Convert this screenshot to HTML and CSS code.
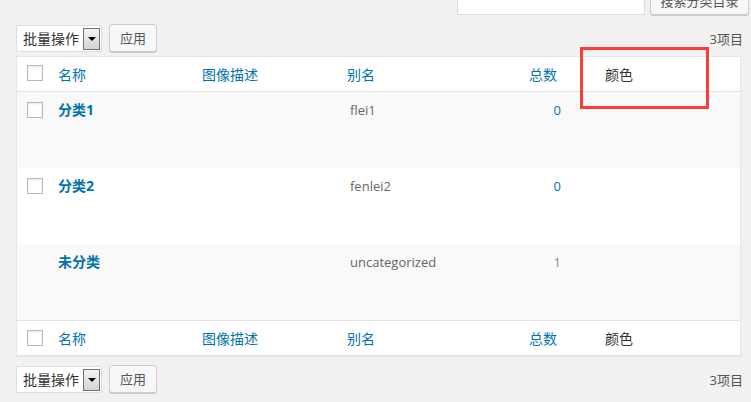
FILE: index.html
```html
<!DOCTYPE html>
<html lang="zh-CN">
<head>
<meta charset="utf-8">
<title>分类目录</title>
<link rel="stylesheet" href="styles.css">
</head>
<body>
<div class="wrap">
  <div class="search-box">
    <div class="search-input"></div>
    <div class="btn search-btn">搜索分类目录</div>
  </div>

  <div class="tablenav tablenav-top">
    <div class="bulk">
      <span class="bulk-label">批量操作</span>
      <span class="bulk-arrow"><span class="tri"></span></span>
    </div>
    <div class="btn apply">应用</div>
    <div class="count">3项目</div>
  </div>

  <div class="list">
    <div class="row head">
      <div class="cell cb"><span class="check"></span></div>
      <div class="cell link">名称</div>
      <div class="cell link">图像描述</div>
      <div class="cell link">别名</div>
      <div class="cell link posts-h">总数</div>
      <div class="cell plain">颜色</div>
    </div>
    <div class="row item alt">
      <div class="cell cb"><span class="check"></span></div>
      <div class="cell title">分类1</div>
      <div class="cell"></div>
      <div class="cell slug">flei1</div>
      <div class="cell num">0</div>
      <div class="cell"></div>
    </div>
    <div class="row item">
      <div class="cell cb"><span class="check"></span></div>
      <div class="cell title">分类2</div>
      <div class="cell"></div>
      <div class="cell slug">fenlei2</div>
      <div class="cell num">0</div>
      <div class="cell"></div>
    </div>
    <div class="row item alt">
      <div class="cell cb"></div>
      <div class="cell title">未分类</div>
      <div class="cell"></div>
      <div class="cell slug">uncategorized</div>
      <div class="cell num num-muted">1</div>
      <div class="cell"></div>
    </div>
    <div class="row head foot">
      <div class="cell cb"><span class="check"></span></div>
      <div class="cell link">名称</div>
      <div class="cell link">图像描述</div>
      <div class="cell link">别名</div>
      <div class="cell link posts-h">总数</div>
      <div class="cell plain">颜色</div>
    </div>
  </div>

  <div class="tablenav tablenav-bottom">
    <div class="bulk">
      <span class="bulk-label">批量操作</span>
      <span class="bulk-arrow"><span class="tri"></span></span>
    </div>
    <div class="btn apply">应用</div>
    <div class="count">3项目</div>
  </div>

  <div class="annot"></div>
</div>
</body>
</html>
```

FILE: styles.css
```css
* { box-sizing: border-box; }

html, body {
  margin: 0;
  padding: 0;
  background: #f1f1f1;
}

body {
  font-family: "Open Sans", "Noto Sans CJK SC", sans-serif;
  font-size: 13px;
  color: #444;
  width: 751px;
  height: 402px;
  overflow: hidden;
}

.wrap {
  position: relative;
  padding: 0 10px 0 16px;
}

/* search box at the very top, mostly scrolled off */
.search-box {
  height: 16px;
  display: flex;
  justify-content: flex-end;
  align-items: flex-end;
  margin-right: -8px;
  padding-bottom: 1px;
  overflow: hidden;
}

.search-input {
  width: 188px;
  height: 28px;
  background: #fff;
  border: 1px solid #ddd;
  box-shadow: inset 0 1px 2px rgba(0,0,0,.07);
  margin-right: 5px;
}

.btn {
  height: 28px;
  line-height: 26px;
  padding: 0 10px;
  background: #f7f7f7;
  border: 1px solid #ccc;
  border-radius: 3px;
  box-shadow: 0 1px 0 #ccc;
  color: #555;
  font-size: 13px;
  text-align: center;
  white-space: nowrap;
}

.search-btn {
  width: 99px;
  padding: 0;
}

/* tablenav */
.tablenav {
  display: flex;
  align-items: center;
  height: 28px;
}

.tablenav-top {
  margin-top: 8px;
  margin-bottom: 4px;
}

.tablenav-bottom {
  margin-top: 9px;
}

.bulk {
  display: flex;
  align-items: center;
  width: 86px;
  height: 27px;
  background: #fff;
  border: 1px solid #ddd;
  padding-left: 6px;
  margin-top: 1px;
}

.bulk-label {
  font-size: 14px;
  color: #333;
  line-height: 20px;
  width: 60px;
}

.bulk-arrow {
  display: flex;
  align-items: center;
  justify-content: center;
  width: 17px;
  height: 22px;
  border: 1px solid #707070;
  background: linear-gradient(#f4f4f4, #d3d3d3);
}

.tri {
  width: 0;
  height: 0;
  border-left: 4px solid transparent;
  border-right: 4px solid transparent;
  border-top: 4px solid #000;
}

.apply {
  width: 48px;
  padding: 0;
  margin-left: 7px;
}

.count {
  margin-left: auto;
  margin-right: -2px;
  color: #555;
  font-size: 13px;
}

/* list table */
.list {
  background: #fff;
  border: 1px solid #e5e5e5;
  box-shadow: 0 1px 1px rgba(0,0,0,.04);
}

.row {
  display: grid;
  grid-template-columns: 31px 144px 145px 182px 76px 145px;
}

.head {
  height: 35px;
  border-bottom: 1px solid #e1e1e1;
  background: #fff;
}

.foot {
  border-bottom: 0;
  border-top: 1px solid #e1e1e1;
}

.item {
  height: 76px;
  background: #fff;
}

.item.alt {
  background: #f9f9f9;
}

.cell {
  padding: 8px 10px 0 10px;
  line-height: 20px;
  white-space: nowrap;
}

.cb {
  padding-top: 8px;
}

.item .cb {
  padding-top: 10px;
}

.foot .cb {
  padding-top: 9px;
}

.check {
  display: block;
  width: 16px;
  height: 16px;
  background: #fff;
  border: 1px solid #b4b9be;
  box-shadow: inset 0 1px 2px rgba(0,0,0,.1);
}

.link {
  color: #0073aa;
  font-size: 14px;
}

.plain {
  color: #333;
  font-size: 14px;
}

.posts-h {
  padding-left: 10px;
}

.head .plain {
  padding-left: 10px;
}

.title {
  color: #0073aa;
  font-weight: 700;
  font-size: 14px;
}

.slug {
  color: #666;
  font-size: 13px;
  padding-left: 13px;
}

.num {
  color: #0073aa;
  text-align: right;
  padding-right: 34px;
  font-size: 13px;
}

.num-muted {
  color: #7986a3;
}

/* annotation overlay */
.annot {
  position: absolute;
  left: 580px;
  top: 47px;
  width: 129px;
  height: 62px;
  border: 3px solid #fc3b3b;
}
```
